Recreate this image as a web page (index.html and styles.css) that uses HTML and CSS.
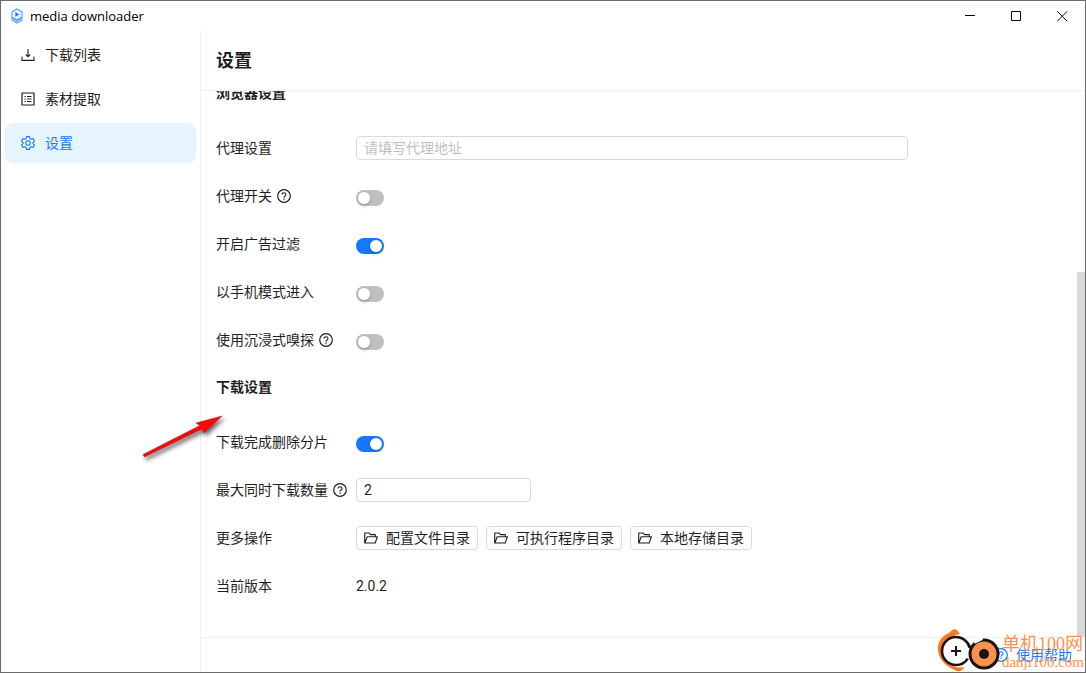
FILE: index.html
```html
<!DOCTYPE html>
<html lang="zh-CN">
<head>
<meta charset="utf-8">
<title>media downloader</title>
<link rel="stylesheet" href="styles.css">
</head>
<body>
<svg class="defs" aria-hidden="true">
  <symbol id="help" viewBox="0 0 14 14"><circle cx="7" cy="7" r="6.3" fill="none" stroke="currentColor" stroke-width="1.2"/><path d="M5 5.6C5 4.4 5.9 3.8 7 3.8s2 .7 2 1.7c0 1.5-2 1.4-2 2.9v.3" fill="none" stroke="currentColor" stroke-width="1.1"/><circle cx="7" cy="10.2" r=".7" fill="currentColor"/></symbol>
  <symbol id="folder" viewBox="0 0 14 14"><path d="M2.4 12 .7 12V2h4.2l1.6 1.6h4.8v2.2M.9 12l2.3-6.2h10.2L11.2 12z" fill="none" stroke="currentColor" stroke-width="1.1" stroke-linejoin="round"/></symbol>
</svg>
<div class="window">
  <header class="titlebar">
    <svg class="logo" viewBox="0 0 14 16"><path d="M7 1l5 2.9v5.2L7 12 2 9.1V3.9z" fill="#eef6ff" stroke="#4a9bff" stroke-width="1.1"/><path d="M5.3 4v4.800l4-2.400z" fill="#1677ff"/><path d="M1.3 9.900 7 13.100l5.700-3.200M1.300 11.800 7 15l5.700-3.200" fill="none" stroke="#5ba5ff" stroke-width="1.2"/></svg>
    <span class="app-name">media downloader</span>
    <button class="win-btn" aria-label="最小化"><svg viewBox="0 0 11 11"><path d="M0 4.500h10"/></svg></button>
    <button class="win-btn" aria-label="最大化"><svg viewBox="0 0 11 11"><path d="M.5.5h9v9h-9z"/></svg></button>
    <button class="win-btn" aria-label="关闭"><svg viewBox="0 0 11 11"><path d="M.3.3l9.900 9.900M10.200.3.3 10.200"/></svg></button>
  </header>
  <div class="layout">
    <nav class="sidebar">
      <a class="nav-item" href="#list"><svg class="icon" viewBox="0 0 14 14"><path d="M7 1v7.500M4.800 6.500 7 8.800l2.200-2.300M1 8.800v3.600h12V8.800" fill="none" stroke="currentColor" stroke-width="1.1"/></svg>下载列表</a>
      <a class="nav-item" href="#extract"><svg class="icon" viewBox="0 0 14 14"><path d="M1 1h12v12H1z" fill="none" stroke="currentColor" stroke-width="1.2"/><path d="M3.500 4.500h1.300M6 4.500h4.500M3.500 7h1.300M6 7h4.500M3.500 9.500h1.300M6 9.500h4.500" stroke="currentColor"/></svg>素材提取</a>
      <a class="nav-item active" href="#settings"><svg class="icon" viewBox="0 0 14 14"><path d="M5.500.6h3l.4 1.900 1.200.7 1.900-.7 1.400 2.600-1.400 1.300v1.200l1.400 1.300-1.400 2.600-1.900-.7-1.200.7-.4 1.900h-3l-.4-1.900-1.200-.7-1.900.7L.6 8.900 2 7.600V6.400L.6 5.100 2 2.500l1.900.7 1.200-.7z" fill="none" stroke="currentColor" stroke-width="1.1" stroke-linejoin="round"/><circle cx="7" cy="7" r="2.200" fill="none" stroke="currentColor" stroke-width="1.1"/></svg>设置</a>
    </nav>
    <main class="page">
      <h1 class="page-title">设置</h1>
      <div class="scroller">
        <form class="form">
          <h2 class="section">浏览器设置</h2>
          <div class="row"><label class="label" for="proxy">代理设置</label><input class="field wide" id="proxy" type="text" placeholder="请填写代理地址"></div>
          <div class="row"><label class="label" for="useproxy">代理开关<svg class="help"><use href="#help"/></svg></label><input class="switch" id="useproxy" type="checkbox"></div>
          <div class="row"><label class="label" for="adblock">开启广告过滤</label><input class="switch" id="adblock" type="checkbox" checked></div>
          <div class="row"><label class="label" for="mobile">以手机模式进入</label><input class="switch" id="mobile" type="checkbox"></div>
          <div class="row"><label class="label" for="sniff">使用沉浸式嗅探<svg class="help"><use href="#help"/></svg></label><input class="switch" id="sniff" type="checkbox"></div>
          <h2 class="section">下载设置</h2>
          <div class="row"><label class="label" for="clean">下载完成删除分片</label><input class="switch" id="clean" type="checkbox" checked></div>
          <div class="row"><label class="label" for="max">最大同时下载数量<svg class="help"><use href="#help"/></svg></label><input class="field narrow" id="max" type="text" value="2"></div>
          <div class="row"><span class="label">更多操作</span><div class="actions">
            <button class="btn" type="button"><svg class="icon"><use href="#folder"/></svg>配置文件目录</button>
            <button class="btn" type="button"><svg class="icon"><use href="#folder"/></svg>可执行程序目录</button>
            <button class="btn" type="button"><svg class="icon"><use href="#folder"/></svg>本地存储目录</button>
          </div></div>
          <div class="row"><span class="label">当前版本</span><span>2.0.2</span></div>
        </form>
        <div class="thumb"></div>
      </div>
      <footer class="footer"><a class="help-link" href="#help-page"><svg class="icon"><use href="#help"/></svg>使用帮助</a></footer>
    </main>
  </div>
  <svg class="arrow" viewBox="0 0 90 56"><path d="M7 43.500 64 14.500 60 12 86 5 68 22 66 18 8.500 46z" fill="#fb0505" stroke="#a33" stroke-width=".6"/></svg>
  <div class="watermark">
    <svg class="mark" viewBox="0 0 64 44"><path d="M23 6 20 2C17 0 15 2 12 5 2 9-1 18 2 27c3 8 10 13 18 16 3 1 6-1 7-4C17 41 8 35 5 26 3 16 11 8 23 6z" fill="#ff7a1c"/><circle cx="19" cy="23" r="14" fill="#fff" stroke="#191517" stroke-width="2.600" stroke-dasharray="76 12" stroke-dashoffset="-8"/><path d="M19 18v10M14 23h10M31 15l3 6" stroke="#191517" stroke-width="2"/><circle cx="47" cy="26" r="14" fill="#ff914d" stroke="#191517" stroke-width="3"/><path d="m37 14 8-4" stroke="#fff" stroke-width="4"/><circle cx="47" cy="26" r="5" fill="#191517"/></svg>
    <div class="mark-text"><span class="mark-name">单机100网</span><span class="mark-url">danji100.com</span></div>
  </div>
</div>
</body>
</html>
```
FILE: styles.css
```css
* { box-sizing: border-box; }
body {
  margin: 0;
  color: #1f1f1f;
  font: 14px/22px Roboto, "Noto Sans CJK SC", sans-serif;
}
button, input { font: inherit; color: inherit; }
.defs { position: absolute; width: 0; height: 0; }
.window {
  position: relative;
  display: flex;
  flex-direction: column;
  height: 100vh;
  overflow: hidden;
  border: 1px solid #6b6b6b;
  background: #fff;
}
.titlebar { display: flex; align-items: center; height: 30px; padding-left: 9px; }
.logo { width: 14px; height: 16px; margin-right: 6px; }
.app-name { flex: 1; color: #000; font: 13px/18px "Open Sans", sans-serif; }
.win-btn {
  display: grid;
  place-items: center;
  width: 46px;
  height: 28px;
  padding: 0;
  border: 0;
  background: none;
}
.win-btn svg { width: 11px; height: 11px; fill: none; stroke: #000; }
.layout { display: flex; flex: 1; min-height: 0; }
.sidebar {
  display: flex;
  flex-direction: column;
  gap: 4px;
  width: 200px;
  padding: 4px;
  border-right: 1px solid #f0f0f0;
}
.nav-item {
  display: flex;
  align-items: center;
  gap: 10px;
  height: 40px;
  padding: 0 16px;
  border-radius: 8px;
  color: #1f1f1f;
  text-decoration: none;
}
.nav-item.active { background: #e6f4ff; color: #1677ff; }
.icon { width: 14px; height: 14px; flex: none; }
.page { display: flex; flex: 1; flex-direction: column; min-width: 0; }
.page-title {
  height: 60px;
  margin: 0;
  padding: 0 15px;
  border-bottom: 1px solid #f0f0f0;
  font-size: 18px;
  font-weight: 700;
  line-height: 60px;
}
.scroller { position: relative; flex: 1; min-height: 0; overflow: hidden; }
.form { margin-top: -9px; padding: 0 20px 0 15px; }
.section { margin: 0 0 32px; font-size: 14px; font-weight: 700; line-height: 22px; }
.row { display: flex; align-items: center; height: 24px; margin-bottom: 24px; }
.label { display: flex; flex: none; align-items: center; gap: 5px; width: 140px; }
.help { width: 14px; height: 14px; }
.field {
  height: 24px;
  padding: 0 7px;
  border: 1px solid #d9d9d9;
  border-radius: 4px;
  background: #fff;
}
.field::placeholder { color: #bfbfbf; }
.wide { width: 65%; }
.narrow { width: 175px; }
.switch {
  width: 28px;
  height: 16px;
  margin: 4px 0 0;
  padding: 2px;
  border-radius: 8px;
  background: #bfbfbf;
  appearance: none;
}
.switch::before {
  display: block;
  width: 12px;
  height: 12px;
  border-radius: 50%;
  background: #fff;
  box-shadow: 0 2px 4px rgba(0, 35, 11, 0.2);
  content: "";
}
.switch:checked { background: #1677ff; }
.switch:checked::before { margin-left: auto; }
.actions { display: flex; gap: 8px; }
.btn {
  display: flex;
  align-items: center;
  gap: 8px;
  height: 24px;
  padding: 0 7px;
  border: 1px solid #d9d9d9;
  border-radius: 4px;
  background: #fff;
  line-height: 22px;
  white-space: nowrap;
}
.thumb { position: absolute; top: 181px; right: 0; bottom: 0; width: 8px; background: #d9d9d9; }
.footer {
  display: flex;
  align-items: center;
  justify-content: flex-end;
  height: 35px;
  padding-right: 13px;
  border-top: 1px solid #f0f0f0;
}
.help-link { display: flex; align-items: center; gap: 8px; color: #1677ff; text-decoration: none; }
.arrow {
  position: absolute;
  top: 410px;
  left: 135px;
  width: 90px;
  height: 56px;
  filter: drop-shadow(2px 3px 2px rgba(0, 0, 0, 0.6));
}
.watermark { position: absolute; right: 1px; bottom: 0; display: flex; align-items: flex-end; gap: 1px; }
.mark { width: 64px; height: 44px; }
.mark-text {
  display: flex;
  flex-direction: column;
  padding-bottom: 1px;
  color: #ff914d;
  white-space: nowrap;
}
.mark-name { font: 18px/20px "Liberation Serif", "Noto Sans CJK SC", serif; }
.mark-url { font: 15px/17px "Liberation Serif", serif; }
```
